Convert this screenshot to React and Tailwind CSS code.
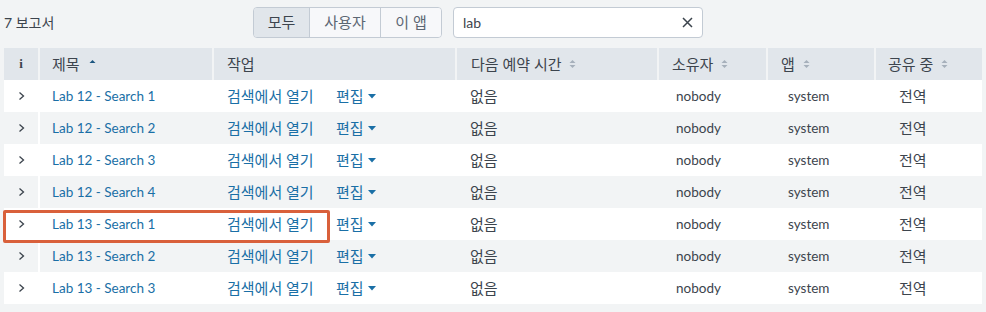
import React from 'react'

const rows = [
  'Lab 12 - Search 1',
  'Lab 12 - Search 2',
  'Lab 12 - Search 3',
  'Lab 12 - Search 4',
  'Lab 13 - Search 1',
  'Lab 13 - Search 2',
  'Lab 13 - Search 3',
]

const font = { fontFamily: 'Lato, "Noto Sans CJK KR", sans-serif' }

const SortBoth = () => (
  <svg width="7" height="10" viewBox="0 0 7 10" className="ml-2">
    <path d="M3.5 1 L6.5 4 L0.5 4 Z" fill="#a6b0bb" />
    <path d="M3.5 9 L6.5 6 L0.5 6 Z" fill="#a6b0bb" />
  </svg>
)

const SortUp = () => (
  <svg width="7" height="6" viewBox="0 0 7 6" className="ml-[9px] mb-1">
    <path d="M3.5 1 L6.5 4 L0.5 4 Z" fill="#1b5680" />
  </svg>
)

const Chevron = () => (
  <svg width="7" height="10" viewBox="0 0 7 10">
    <path d="M1.5 1.5 L5.5 5 L1.5 8.5" fill="none" stroke="#3c444d" strokeWidth="1.3" />
  </svg>
)

const Caret = () => (
  <svg width="8" height="5" viewBox="0 0 8 5" className="ml-1">
    <path d="M0 0 L8 0 L4 4.5 Z" fill="#1a6fa6" />
  </svg>
)

const App = () => {
  return (
    <div className="w-[986px] h-[312px] bg-[#f2f4f5] text-[#3c444d] relative" style={font}>
      <div className="flex items-center h-[48px] pb-[4px]">
        <div className="pl-[4px] w-[253px] text-[14px]">7 보고서</div>
        <div className="flex h-[31px] border border-[#c3cbd4] rounded-[4px] overflow-hidden text-[15px] text-[#5c6773]">
          <div className="w-[56px] flex items-center justify-center bg-[#e1e6eb] text-[#3c444d] border-r border-[#c3cbd4]">모두</div>
          <div className="w-[71px] flex items-center justify-center bg-[#f7f8fa] border-r border-[#c3cbd4]">사용자</div>
          <div className="w-[60px] flex items-center justify-center bg-[#f7f8fa]">이 앱</div>
        </div>
        <div className="ml-[11px] w-[250px] h-[31px] bg-white border border-[#c3cbd4] rounded-[4px] flex items-center justify-between pl-[9px] pr-[9px] text-[14px] text-[#3c444d]">
          <span>lab</span>
          <svg width="11" height="11" viewBox="0 0 11 11">
            <path d="M1 1 L10 10 M10 1 L1 10" stroke="#3c444d" strokeWidth="1.5" />
          </svg>
        </div>
      </div>

      <div className="ml-[4px] w-[978px] text-[13.5px]">
        <div className="flex h-[32px] bg-[#e1e6eb] text-[15px]">
          <div className="w-[36px] flex items-center justify-center border-r-2 border-[#f2f4f5] font-bold text-[13px]" style={{ fontFamily: '"Liberation Serif", serif' }}>i</div>
          <div className="w-[174px] flex items-center pl-[12px] border-r-2 border-[#f2f4f5]">제목<SortUp /></div>
          <div className="w-[243px] flex items-center pl-[13px] border-r-2 border-[#f2f4f5]">작업</div>
          <div className="w-[202px] flex items-center pl-[14px] border-r-2 border-[#f2f4f5]">다음 예약 시간<SortBoth /></div>
          <div className="w-[109px] flex items-center pl-[13px] border-r-2 border-[#f2f4f5]">소유자<SortBoth /></div>
          <div className="w-[108px] flex items-center pl-[13px] border-r-2 border-[#f2f4f5]">앱<SortBoth /></div>
          <div className="w-[106px] flex items-center pl-[12px]">공유 중<SortBoth /></div>
        </div>
        {rows.map((name, i) => (
          <div key={name} className={`flex h-[32px] ${i % 2 === 0 ? 'bg-white' : 'bg-[#f2f4f5]'}`}>
            <div className="w-[36px] flex items-center justify-center border-r-2 border-white">
              <Chevron />
            </div>
            <div className="w-[174px] flex items-center pl-[12px] text-[#1a6fa6]">{name}</div>
            <div className="w-[243px] flex items-center pl-[13px] text-[#1a6fa6] text-[15px]">
              <span className="w-[109px]">검색에서 열기</span>
              <span className="flex items-center">편집<Caret /></span>
            </div>
            <div className="w-[202px] flex items-center pl-[13px] text-[15px]">없음</div>
            <div className="w-[109px] flex items-center pl-[17px]">nobody</div>
            <div className="w-[108px] flex items-center pl-[20px]">system</div>
            <div className="w-[106px] flex items-center pl-[23px] text-[15px]">전역</div>
          </div>
        ))}
      </div>

      <div className="absolute left-[3px] top-[210px] w-[327px] h-[33px] border-[3px] border-[#d9603b] rounded-[2px]" />
    </div>
  )
}

export default App
